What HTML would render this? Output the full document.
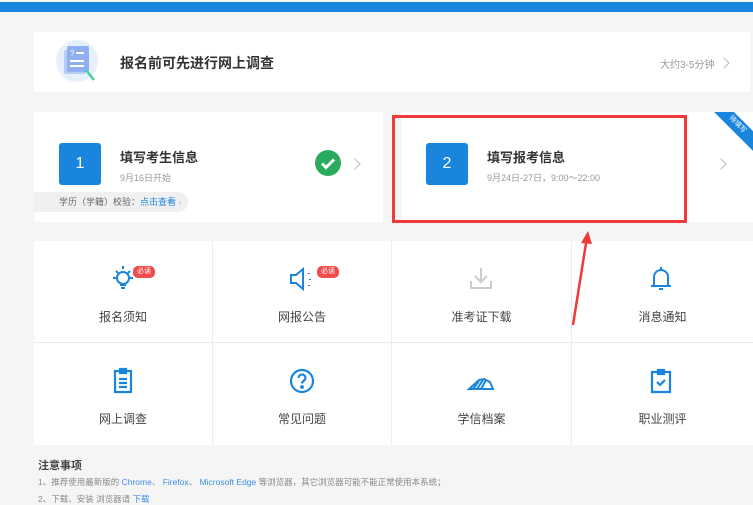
<!DOCTYPE html><html><head><meta charset="utf-8"><style>
*{margin:0;padding:0;box-sizing:border-box}
body{width:753px;height:500px;overflow:hidden;background:#f5f5f5;font-family:"Liberation Sans","Noto Sans CJK SC",sans-serif;position:relative;color:#333}
.abs{position:absolute}
.card{position:absolute;background:#fff}
.t{font-size:13px;font-weight:bold;color:#333;white-space:nowrap}
.s{font-size:9px;color:#999;white-space:nowrap}
.box{position:absolute;width:42px;height:42px;background:#1a85dd;border-radius:3px;color:#fff;font-size:16px;text-align:center;line-height:42px}
.arr{position:absolute;width:8px;height:8px;border-top:1.3px solid #bbb;border-right:1.3px solid #bbb;transform:rotate(45deg)}
.grid{position:absolute;left:34px;top:241px;width:719px;height:204px;background:#ececec;display:grid;grid-template-columns:178px 178px 179px 181px;grid-template-rows:101px 102px;gap:1px}
.cell{position:relative;background:#fff}
.cell .lb{position:absolute;top:67px;width:100%;text-align:center;font-size:12px;color:#444}
.cell svg{position:absolute;left:73px;top:22px}
.bd{position:absolute;background:#f04c4c;color:#fff;font-size:7px;border-radius:5px;padding:1px 4px;line-height:10px}
</style></head><body>
<div class="abs" style="left:0;top:2px;width:753px;height:10px;background:#1a85dd"></div>
<div class="card" style="left:34px;top:32px;width:716px;height:60px">
<svg class="abs" style="left:22px;top:8px" width="46" height="46" viewBox="0 0 46 46"><circle cx="21" cy="21" r="21" fill="#e6f0fd"/><rect x="8" y="10" width="22" height="24" rx="2" fill="#b8cdf6"/><rect x="11" y="6" width="22" height="26" rx="2" fill="#8eb0f0"/><text x="14" y="16" font-size="8" fill="#fff">?</text><rect x="20" y="12" width="8" height="2" fill="#fff"/><rect x="14" y="20" width="14" height="2" fill="#fff"/><rect x="14" y="25" width="14" height="2" fill="#fff"/><line x1="30" y1="30" x2="38" y2="40" stroke="#4ccf9a" stroke-width="2.5"/></svg>
<div class="abs t" style="left:86px;top:21px;font-size:14px">报名前可先进行网上调查</div>
<div class="abs s" style="left:626px;top:24px;font-size:10px">大约3-5分钟</div>
<div class="arr" style="left:686px;top:27px"></div>
</div>
<div class="card" style="left:34px;top:112px;width:349px;height:110px">
<div class="box" style="left:25px;top:31px">1</div>
<div class="abs t" style="left:86px;top:35px">填写考生信息</div>
<div class="abs s" style="left:86px;top:59px">9月16日开始</div>
<svg class="abs" style="left:281px;top:38px" width="26" height="26"><circle cx="13" cy="13" r="13" fill="#2aaa5f"/><path d="M7 13.5l4 4 8-8" stroke="#fff" stroke-width="3" fill="none"/></svg>
<div class="arr" style="left:317px;top:48px"></div>
<div class="abs" style="left:0;top:80px;width:154px;height:20px;background:#f0f0f0;border-radius:0 10px 10px 0;font-size:9px;color:#666;line-height:20px;padding-left:25px;white-space:nowrap">学历（学籍）校验：<span style="color:#1a85dd">点击查看</span> <span style="color:#bbb">›</span></div>
</div>
<div class="card" style="left:402px;top:112px;width:351px;height:110px;overflow:hidden">
<div class="box" style="left:24px;top:31px">2</div>
<div class="abs t" style="left:85px;top:35px">填写报考信息</div>
<div class="abs s" style="left:85px;top:59px">9月24日-27日，9:00～22:00</div>
<div class="arr" style="left:315px;top:48px"></div>
<div class="abs" style="left:300px;top:6px;width:70px;height:14px;background:#1a85dd;transform:rotate(45deg);color:#fff;font-size:7px;text-align:center;line-height:14px">待填写</div>
</div>
<div class="abs" style="left:392px;top:115px;width:295px;height:108px;border:3px solid #f03a3a"></div>
<div class="grid">
<div class="cell"><svg width="32" height="32" viewBox="0 0 32 32" fill="none" stroke="#1a85dd" stroke-width="2"><circle cx="16" cy="15" r="6"/><path d="M13 22h6M14 25h4M16 3v3M6 15h3M23 15h3M9 8l2 2M23 8l-2 2"/></svg><span class="bd" style="left:99px;top:25px">必读</span><div class="lb">报名须知</div></div>
<div class="cell"><svg width="32" height="32" viewBox="0 0 32 32" fill="none" stroke="#1a85dd" stroke-width="2"><path d="M5 12h5l7-6v20l-7-6H5z"/><path d="M23 10v1M24 16v1M23 22v1"/></svg><span class="bd" style="left:104px;top:25px">必读</span><div class="lb">网报公告</div></div>
<div class="cell"><svg width="32" height="32" viewBox="0 0 32 32" fill="none" stroke="#ccc" stroke-width="2"><path d="M16 5v14M10 13l6 6 6-6M6 18v7h20v-7"/></svg><div class="lb">准考证下载</div></div>
<div class="cell"><svg width="32" height="32" viewBox="0 0 32 32" fill="none" stroke="#1a85dd" stroke-width="2"><path d="M16 4v2M9 22V14a7 7 0 0114 0v8M6 23h20M14 26h4"/></svg><div class="lb">消息通知</div></div>
<div class="cell"><svg width="32" height="32" viewBox="0 0 32 32" fill="none" stroke="#1a85dd" stroke-width="2.2"><path d="M8 6h16v21H8zM13 4h6v4h-6zM12 14h8M12 18h8M12 22h8"/></svg><div class="lb">网上调查</div></div>
<div class="cell"><svg width="32" height="32" viewBox="0 0 32 32" fill="none" stroke="#1a85dd" stroke-width="2.2"><circle cx="16" cy="16" r="11"/><path d="M12.5 13a3.5 3.5 0 117 0c0 2.5-3.5 3-3.5 5.5"/><circle cx="16" cy="22" r=".8" fill="#1a85dd"/></svg><div class="lb">常见问题</div></div>
<div class="cell"><svg width="32" height="32" viewBox="0 0 32 32" fill="none" stroke="#1a85dd" stroke-width="2"><path d="M4 24h24l-3-7-6-3-5 1zM8 24l6-8M12 24l6-9M16 24l5-9"/></svg><div class="lb">学信档案</div></div>
<div class="cell"><svg width="32" height="32" viewBox="0 0 32 32" fill="none" stroke="#1a85dd" stroke-width="2.2"><path d="M7 7h18v20H7zM13 5h6v4h-6zM12 17l3 3 5-5"/></svg><div class="lb">职业测评</div></div>
</div>
<div class="abs" style="left:38px;top:457px;font-size:11px;font-weight:bold;color:#444">注意事项</div>
<div class="abs s" style="left:38px;top:476px;color:#888;font-size:8.5px">1、推荐使用最新版的 <span style="color:#3a8ee6">Chrome</span>、 <span style="color:#3a8ee6">Firefox</span>、 <span style="color:#3a8ee6">Microsoft Edge</span> 等浏览器，其它浏览器可能不能正常使用本系统；</div>
<div class="abs s" style="left:38px;top:493px;color:#888;font-size:8.5px">2、下载、安装 浏览器请 <span style="color:#3a8ee6">下载</span></div>
<svg class="abs" style="left:560px;top:225px" width="40" height="105"><path d="M13 100L27 12" stroke="#f03a3a" stroke-width="2.5"/><path d="M21 18l7-12 4 13z" fill="#f03a3a"/></svg>
</body></html>
